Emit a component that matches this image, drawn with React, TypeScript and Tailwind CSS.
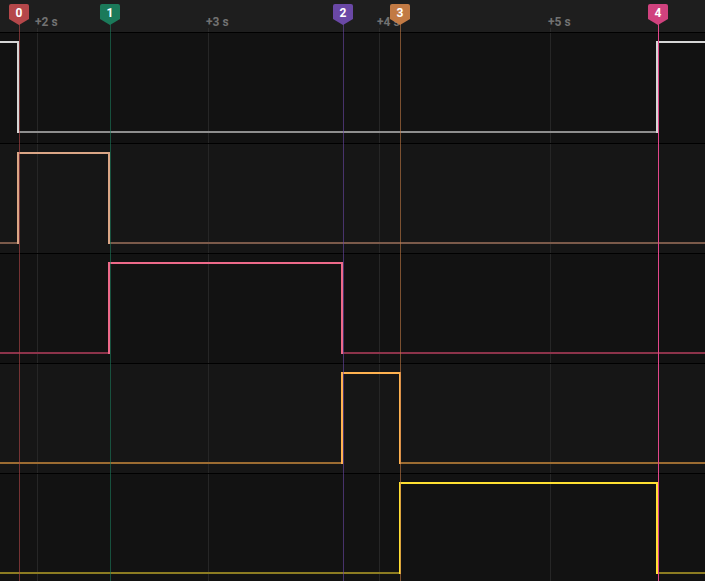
import React from "react";

type Seg = [number, number, boolean];

const GRID = [37, 208, 379, 550];

const ticks = [
  { x: 37, label: "+2 s" },
  { x: 208, label: "+3 s" },
  { x: 379, label: "+4 s" },
  { x: 550, label: "+5 s" },
];

const markers = [
  { id: 0, x: 19, flag: "#b5474a" },
  { id: 1, x: 110, flag: "#1b7a5a" },
  { id: 2, x: 343, flag: "#6a48a6" },
  { id: 3, x: 400, flag: "#c27a44" },
  { id: 4, x: 658, flag: "#d0427e" },
];

const channels: { hi: string; lo: string; segs: Seg[] }[] = [
  { hi: "#d6d6d6", lo: "#8e8e8e", segs: [[0, 18, true], [18, 657, false], [657, 705, true]] },
  { hi: "#dba686", lo: "#7b5a4a", segs: [[0, 18, false], [18, 109, true], [109, 705, false]] },
  { hi: "#ee6a8a", lo: "#8c334a", segs: [[0, 109, false], [109, 342, true], [342, 705, false]] },
  { hi: "#ffb250", lo: "#9c6c32", segs: [[0, 342, false], [342, 400, true], [400, 705, false]] },
  { hi: "#ffe032", lo: "#8c7c22", segs: [[0, 400, false], [400, 657, true], [657, 705, false]] },
];

function Trace({ hi, lo, segs, height }: { hi: string; lo: string; segs: Seg[]; height: number }) {
  const yHi = 9;
  const yLo = 99;
  return (
    <svg width={705} height={height} className="block">
      {GRID.map((x) => (
        <line key={x} x1={x + 0.5} x2={x + 0.5} y1={0} y2={height} stroke="#262626" strokeWidth={1} />
      ))}
      {segs.map(([a, b, high], i) => (
        <line
          key={"h" + i}
          x1={a}
          x2={b}
          y1={high ? yHi : yLo}
          y2={high ? yHi : yLo}
          stroke={high ? hi : lo}
          strokeWidth={2}
          shapeRendering="crispEdges"
        />
      ))}
      {segs.slice(1).map(([a], i) => (
        <line
          key={"e" + i}
          x1={a}
          x2={a}
          y1={yHi - 1}
          y2={yLo + 1}
          stroke={hi}
          strokeWidth={2}
          shapeRendering="crispEdges"
        />
      ))}
    </svg>
  );
}

function Flag({ color, id }: { color: string; id: number }) {
  return (
    <div className="relative w-[20px] h-[21px]">
      <svg width={20} height={21} className="absolute inset-0">
        <path d="M2 0 H18 Q20 0 20 2 V15 L10 21 L0 15 V2 Q0 0 2 0 Z" fill={color} />
      </svg>
      <span className="absolute inset-x-0 top-[2px] text-center text-[12px] leading-[14px] font-bold text-white">
        {id}
      </span>
    </div>
  );
}

export default function App() {
  return (
    <div className="relative w-[705px] h-[581px] overflow-hidden bg-[#121212] font-['Roboto','Liberation_Sans',sans-serif]">
      {/* time ruler */}
      <div className="relative h-[33px] bg-[#1e1e1e] border-b border-black">
        {ticks.map((t) => (
          <React.Fragment key={t.label}>
            <div className="absolute top-[28px] bottom-0 w-px bg-[#2c2c2c]" style={{ left: t.x }} />
            <span
              className="absolute top-[15px] text-[12px] leading-[14px] font-bold text-[#727272]"
              style={{ left: t.x - 2 }}
            >
              {t.label}
            </span>
          </React.Fragment>
        ))}
      </div>

      {/* channels */}
      <div className="flex flex-col">
        {channels.map((c, i) => (
          <div
            key={i}
            className={"border-b border-black " + (i % 2 === 0 ? "bg-[#121212]" : "bg-[#161616]")}
          >
            <Trace hi={c.hi} lo={c.lo} segs={c.segs} height={i === 0 ? 110 : 109} />
          </div>
        ))}
      </div>

      {/* markers over everything */}
      {markers.map((m) => (
        <div
          key={m.id}
          className="absolute top-[4px] bottom-0 flex flex-col items-center pointer-events-none"
          style={{ left: m.x - 10 }}
        >
          <Flag color={m.flag} id={m.id} />
          <div
            className="w-px flex-1 -mt-px"
            style={{ backgroundColor: m.id === 4 ? "#e2468a" : m.flag, opacity: m.id === 4 ? 1 : 0.6 }}
          />
        </div>
      ))}
    </div>
  );
}
